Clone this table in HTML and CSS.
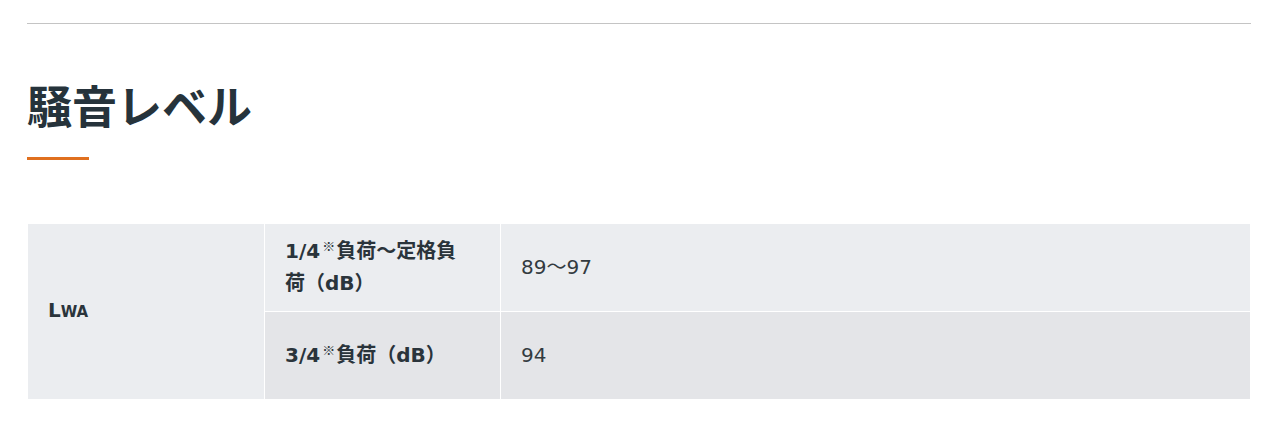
FILE: index.html
```html
<!DOCTYPE html>
<html lang="ja">

<head>
    <meta charset="UTF-8">
    <meta name="viewport" content="width=device-width, initial-scale=1.0">
    <title>騒音レベル</title>
    <link rel="stylesheet" href="styles.css">
</head>

<body>
    <div class="section">
        <hr class="divider">

        <!-- Heading with orange accent -->
        <h2 class="section-title">騒音レベル</h2>

        <!-- Noise level table -->
        <table class="spec-table">
            <tr class="row-odd">
                <th class="unit-cell" rowspan="2">L<span class="unit-sub">WA</span></th>
                <th class="load-cell">1/4<sup class="note">※</sup>負荷～定格負<br>荷（dB）</th>
                <td class="value-cell">89～97</td>
            </tr>
            <tr class="row-even">
                <th class="load-cell">3/4<sup class="note">※</sup>負荷（dB）</th>
                <td class="value-cell">94</td>
            </tr>
        </table>
    </div>
</body>

</html>
```

FILE: styles.css
```css
body {
    margin: 0;
    font-family: "DejaVu Sans", "Noto Sans CJK JP", sans-serif;
    color: #2e3a42;
    background-color: #fff;
}

.section {
    padding: 23px 25px 0 27px;
}

.divider {
    margin: 0;
    border: none;
    border-top: 1px solid #c4c4c4;
}

/* Title */
.section-title {
    margin: 54px 0 0;
    font-family: "Noto Sans CJK JP", sans-serif;
    font-size: 45px;
    font-weight: 700;
    line-height: 54px;
    color: #26333b;
}

.section-title::after {
    content: "";
    display: block;
    width: 62px;
    height: 3px;
    margin-top: 25px;
    background-color: #e0701f;
}

/* Table */
.spec-table {
    width: 100%;
    margin-top: 63px;
    border-collapse: collapse;
    font-size: 20px;
    line-height: 32px;
}

.spec-table th,
.spec-table td {
    border: 1px solid #fff;
    height: 62px;
    padding: 11px 20px 12px;
    text-align: left;
    vertical-align: middle;
}

.spec-table .row-even th,
.spec-table .row-even td {
    height: 64px;
}

.spec-table th {
    font-weight: 700;
    color: #2a343b;
}

.spec-table td {
    font-weight: 400;
    color: #333b40;
}

.row-odd th,
.row-odd td {
    background-color: #ebedf0;
}

.row-even th,
.row-even td {
    background-color: #e4e5e8;
}

.spec-table .unit-cell {
    width: 196px;
    background-color: #ebedf0;
}

.unit-sub {
    font-size: 15px;
}

.spec-table .load-cell {
    width: 195px;
}

.note {
    margin: 0 1px 0 2px;
    font-family: "Noto Sans CJK JP", sans-serif;
    font-size: 13px;
    font-weight: 400;
    line-height: 0;
    vertical-align: 7px;
}
```
